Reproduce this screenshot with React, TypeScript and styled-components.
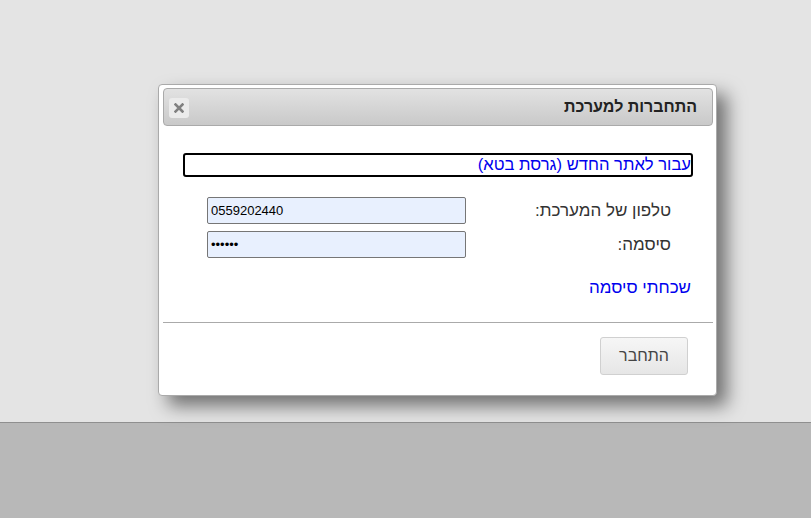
import styled, { createGlobalStyle } from 'styled-components';

const GlobalStyle = createGlobalStyle`
  html, body {
    margin: 0;
    padding: 0;
  }
  body {
    font-family: "Liberation Sans", Arial, sans-serif;
    background: #b8b8b8;
  }
`;

const Page = styled.div`
  position: relative;
  width: 811px;
  height: 518px;
  overflow: hidden;
  background: #b8b8b8;
`;

const TopArea = styled.div`
  height: 422px;
  background: #e4e4e4;
  border-bottom: 1px solid #8f8f8f;
`;

const Dialog = styled.div`
  position: absolute;
  left: 158px;
  top: 84px;
  width: 559px;
  height: 312px;
  box-sizing: border-box;
  background: #fff;
  border: 1px solid #aaa;
  border-radius: 4px;
  padding: 3px 3px 0 4px;
  direction: rtl;
  display: flex;
  flex-direction: column;
  box-shadow: 10px 10px 18px rgba(0, 0, 0, 0.5);
`;

const TitleBar = styled.div`
  height: 38px;
  box-sizing: border-box;
  border: 1px solid #aaa;
  border-radius: 4px;
  background: linear-gradient(#e2e2e2, #c9c9c9);
  display: flex;
  align-items: center;
  justify-content: space-between;
  padding: 0 15px 0 5px;
`;

const Title = styled.span`
  font-size: 16px;
  font-weight: bold;
  color: #222;
`;

const CloseButton = styled.button`
  width: 20px;
  height: 20px;
  padding: 0;
  border: none;
  border-radius: 3px;
  background: #ebebeb;
  display: flex;
  align-items: center;
  justify-content: center;
  margin-top: 2px;
`;

const Content = styled.div`
  flex: 1;
  padding: 27px 20px 0 20px;
  display: flex;
  flex-direction: column;
`;

const BetaLink = styled.a`
  display: block;
  height: 24px;
  box-sizing: border-box;
  border: 2px solid #000;
  border-radius: 3px;
  color: #0000ee;
  text-decoration: none;
  font-size: 16.6px;
  line-height: 19px;
  padding-right: 0;
`;

const Form = styled.div`
  margin-top: 20px;
  display: grid;
  grid-template-columns: 227px 259px;
  row-gap: 7px;
  align-items: center;
`;

const Label = styled.label`
  font-size: 17px;
  color: #333;
  padding-right: 22px;
`;

const Input = styled.input`
  width: 259px;
  height: 27px;
  box-sizing: border-box;
  border: 1px solid #767676;
  border-radius: 2px;
  background: #e8f0fe;
  font-family: "Liberation Sans", Arial, sans-serif;
  font-size: 13px;
  color: #000;
  padding: 0 3px;
  direction: ltr;
`;

const ForgotLink = styled.a`
  margin-top: 20px;
  font-size: 17px;
  color: #0000ee;
  text-decoration: none;
  padding-right: 2px;
`;

const ButtonPane = styled.div`
  height: 73px;
  box-sizing: border-box;
  border-top: 1px solid #aaa;
  padding: 14px 25px 0 0;
  display: flex;
`;

const SubmitButton = styled.button`
  width: 88px;
  height: 38px;
  border: 1px solid #d0d0d0;
  border-radius: 3px;
  background: linear-gradient(#f6f6f6, #e6e6e6);
  font-family: "Liberation Sans", Arial, sans-serif;
  font-size: 16px;
  color: #444;
`;

function CloseIcon() {
  return (
    <svg width="10" height="10" viewBox="0 0 10 10">
      <path d="M1.5 1.5 L8.5 8.5 M8.5 1.5 L1.5 8.5" stroke="#808080" strokeWidth="2.6" strokeLinecap="square" />
    </svg>
  );
}

export default function App() {
  return (
    <Page>
      <GlobalStyle />
      <TopArea />
      <Dialog>
        <TitleBar>
          <Title>התחברות למערכת</Title>
          <CloseButton aria-label="close">
            <CloseIcon />
          </CloseButton>
        </TitleBar>
        <Content>
          <BetaLink href="#">עבור לאתר החדש (גרסת בטא)</BetaLink>
          <Form>
            <Label>טלפון של המערכת:</Label>
            <Input defaultValue="0559202440" />
            <Label>סיסמה:</Label>
            <Input type="password" defaultValue="123456" />
          </Form>
          <ForgotLink href="#">שכחתי סיסמה</ForgotLink>
        </Content>
        <ButtonPane>
          <SubmitButton>התחבר</SubmitButton>
        </ButtonPane>
      </Dialog>
    </Page>
  );
}
